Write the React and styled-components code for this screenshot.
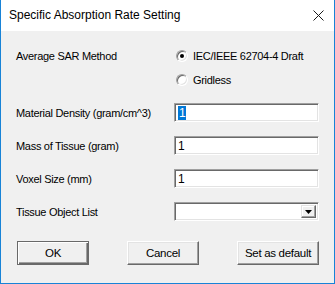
import React from 'react';
import styled, { createGlobalStyle } from 'styled-components';

const GlobalStyle = createGlobalStyle`
  html, body {
    margin: 0;
    padding: 0;
    background: #ffffff;
  }
  * {
    box-sizing: border-box;
  }
`;

const fields = [
  { label: 'Material Density (gram/cm^3)', value: '1', selected: true },
  { label: 'Mass of Tissue (gram)', value: '1' },
  { label: 'Voxel Size (mm)', value: '1' },
];

const App = () => {
  return (
    <>
      <GlobalStyle />
      <Window>
        <TitleBar>
          <Title>Specific Absorption Rate Setting</Title>
          <CloseButton>
            <svg width="11" height="11" viewBox="0 0 11 11">
              <path d="M0.5 0.5 L10.5 10.5 M10.5 0.5 L0.5 10.5" stroke="#1a1a1a" strokeWidth="1" fill="none" />
            </svg>
          </CloseButton>
        </TitleBar>
        <Content>
          <MethodRow>
            <Label>Average SAR Method</Label>
            <RadioGroup>
              <RadioOption>
                <RadioCircle checked />
                <span>IEC/IEEE 62704-4 Draft</span>
              </RadioOption>
              <RadioOption>
                <RadioCircle />
                <span>Gridless</span>
              </RadioOption>
            </RadioGroup>
          </MethodRow>

          <Fields>
            {fields.map((f) => (
              <FieldRow key={f.label}>
                <Label>{f.label}</Label>
                <TextBox>
                  {f.selected ? <Selected>{f.value}</Selected> : f.value}
                </TextBox>
              </FieldRow>
            ))}
            <FieldRow>
              <Label>Tissue Object List</Label>
              <ComboBox>
                <ComboText />
                <ComboArrow>
                  <svg width="7" height="4" viewBox="0 0 7 4">
                    <path d="M0 0 H7 L3.5 4 Z" fill="#000" />
                  </svg>
                </ComboArrow>
              </ComboBox>
            </FieldRow>
          </Fields>

          <ButtonRow>
            <Button isDefault>OK</Button>
            <Button>Cancel</Button>
            <Button wide>Set as default</Button>
          </ButtonRow>
        </Content>
      </Window>
    </>
  );
};

const Window = styled.div`
  width: 335px;
  height: 284px;
  display: flex;
  flex-direction: column;
  border-left: 1px solid #1883d7;
  border-right: 1px solid #1883d7;
  border-bottom: 1px solid #1883d7;
  background: #f0f0f0;
  overflow: hidden;
`;

const TitleBar = styled.div`
  height: 31px;
  flex-shrink: 0;
  background: #ffffff;
  display: flex;
  align-items: center;
  justify-content: space-between;
  padding: 0 9px 0 8px;
`;

const Title = styled.div`
  font-family: 'Liberation Sans', Arial, sans-serif;
  font-size: 12px;
  color: #000000;
  margin-top: -1px;
`;

const CloseButton = styled.div`
  width: 11px;
  height: 11px;
  display: flex;
  margin-right: 1px;
  margin-top: -1px;
`;

const Content = styled.div`
  flex: 1;
  display: flex;
  flex-direction: column;
  padding: 13px 15px 0 15px;
  font-family: 'Liberation Sans', Arial, sans-serif;
  font-size: 11px;
  letter-spacing: -0.3px;
  color: #000000;
`;

const MethodRow = styled.div`
  display: flex;
  align-items: flex-start;
`;

const Label = styled.div`
  width: 158px;
  flex-shrink: 0;
  line-height: 24px;
  white-space: nowrap;
`;

const RadioGroup = styled.div`
  display: flex;
  flex-direction: column;
`;

const RadioOption = styled.div`
  height: 24px;
  display: flex;
  align-items: center;
  gap: 5px;
  padding-left: 2px;
`;

const RadioCircle = styled.span`
  width: 12px;
  height: 12px;
  border-radius: 50%;
  background: #ffffff;
  border: 1px solid;
  border-color: #a0a0a0 #ffffff #ffffff #a0a0a0;
  box-shadow: inset 1px 1px 0 #696969, inset -1px -1px 0 #e3e3e3;
  position: relative;

  &::after {
    content: '';
    display: ${(p) => (p.checked ? 'block' : 'none')};
    position: absolute;
    width: 4px;
    height: 4px;
    border-radius: 50%;
    background: #000000;
    left: 3px;
    top: 3px;
  }
`;

const Fields = styled.div`
  display: flex;
  flex-direction: column;
  gap: 14px;
  margin-top: 11px;
`;

const FieldRow = styled.div`
  display: flex;
  align-items: center;
  height: 19px;
`;

const sunken = `
  border: 1px solid;
  border-color: #a0a0a0 #ffffff #ffffff #a0a0a0;
  box-shadow: inset 1px 1px 0 #696969, inset -1px -1px 0 #e3e3e3;
`;

const TextBox = styled.div`
  width: 145px;
  height: 19px;
  background: #ffffff;
  ${sunken}
  padding: 0 3px;
  display: flex;
  align-items: center;
  font-size: 12px;
`;

const Selected = styled.span`
  background: #0078d7;
  color: #ffffff;
  line-height: 14px;
  padding: 0 1px;
`;

const ComboBox = styled.div`
  width: 145px;
  height: 19px;
  background: #ffffff;
  ${sunken}
  display: flex;
  align-items: stretch;
  padding: 2px;
`;

const ComboText = styled.div`
  flex: 1;
`;

const ComboArrow = styled.div`
  width: 15px;
  background: #f0f0f0;
  border: 1px solid;
  border-color: #e3e3e3 #696969 #696969 #e3e3e3;
  box-shadow: inset -1px -1px 0 #a0a0a0, inset 1px 1px 0 #ffffff;
  display: flex;
  align-items: center;
  justify-content: center;
`;

const ButtonRow = styled.div`
  display: flex;
  justify-content: space-between;
  margin-top: 20px;
  padding-left: 1px;
`;

const Button = styled.div`
  width: ${(p) => (p.wide ? '82px' : '72px')};
  height: 24px;
  display: flex;
  align-items: center;
  justify-content: center;
  background: #f0f0f0;
  font-size: 11.5px;
  border: 1px solid;
  border-color: ${(p) => (p.isDefault ? '#696969' : '#ffffff #696969 #696969 #ffffff')};
  box-shadow: ${(p) =>
    p.isDefault
      ? 'inset 1px 1px 0 #ffffff, inset -1px -1px 0 #696969, inset -2px -2px 0 #a0a0a0'
      : 'inset -1px -1px 0 #a0a0a0, inset 1px 1px 0 #e3e3e3'};
`;

export default App;
